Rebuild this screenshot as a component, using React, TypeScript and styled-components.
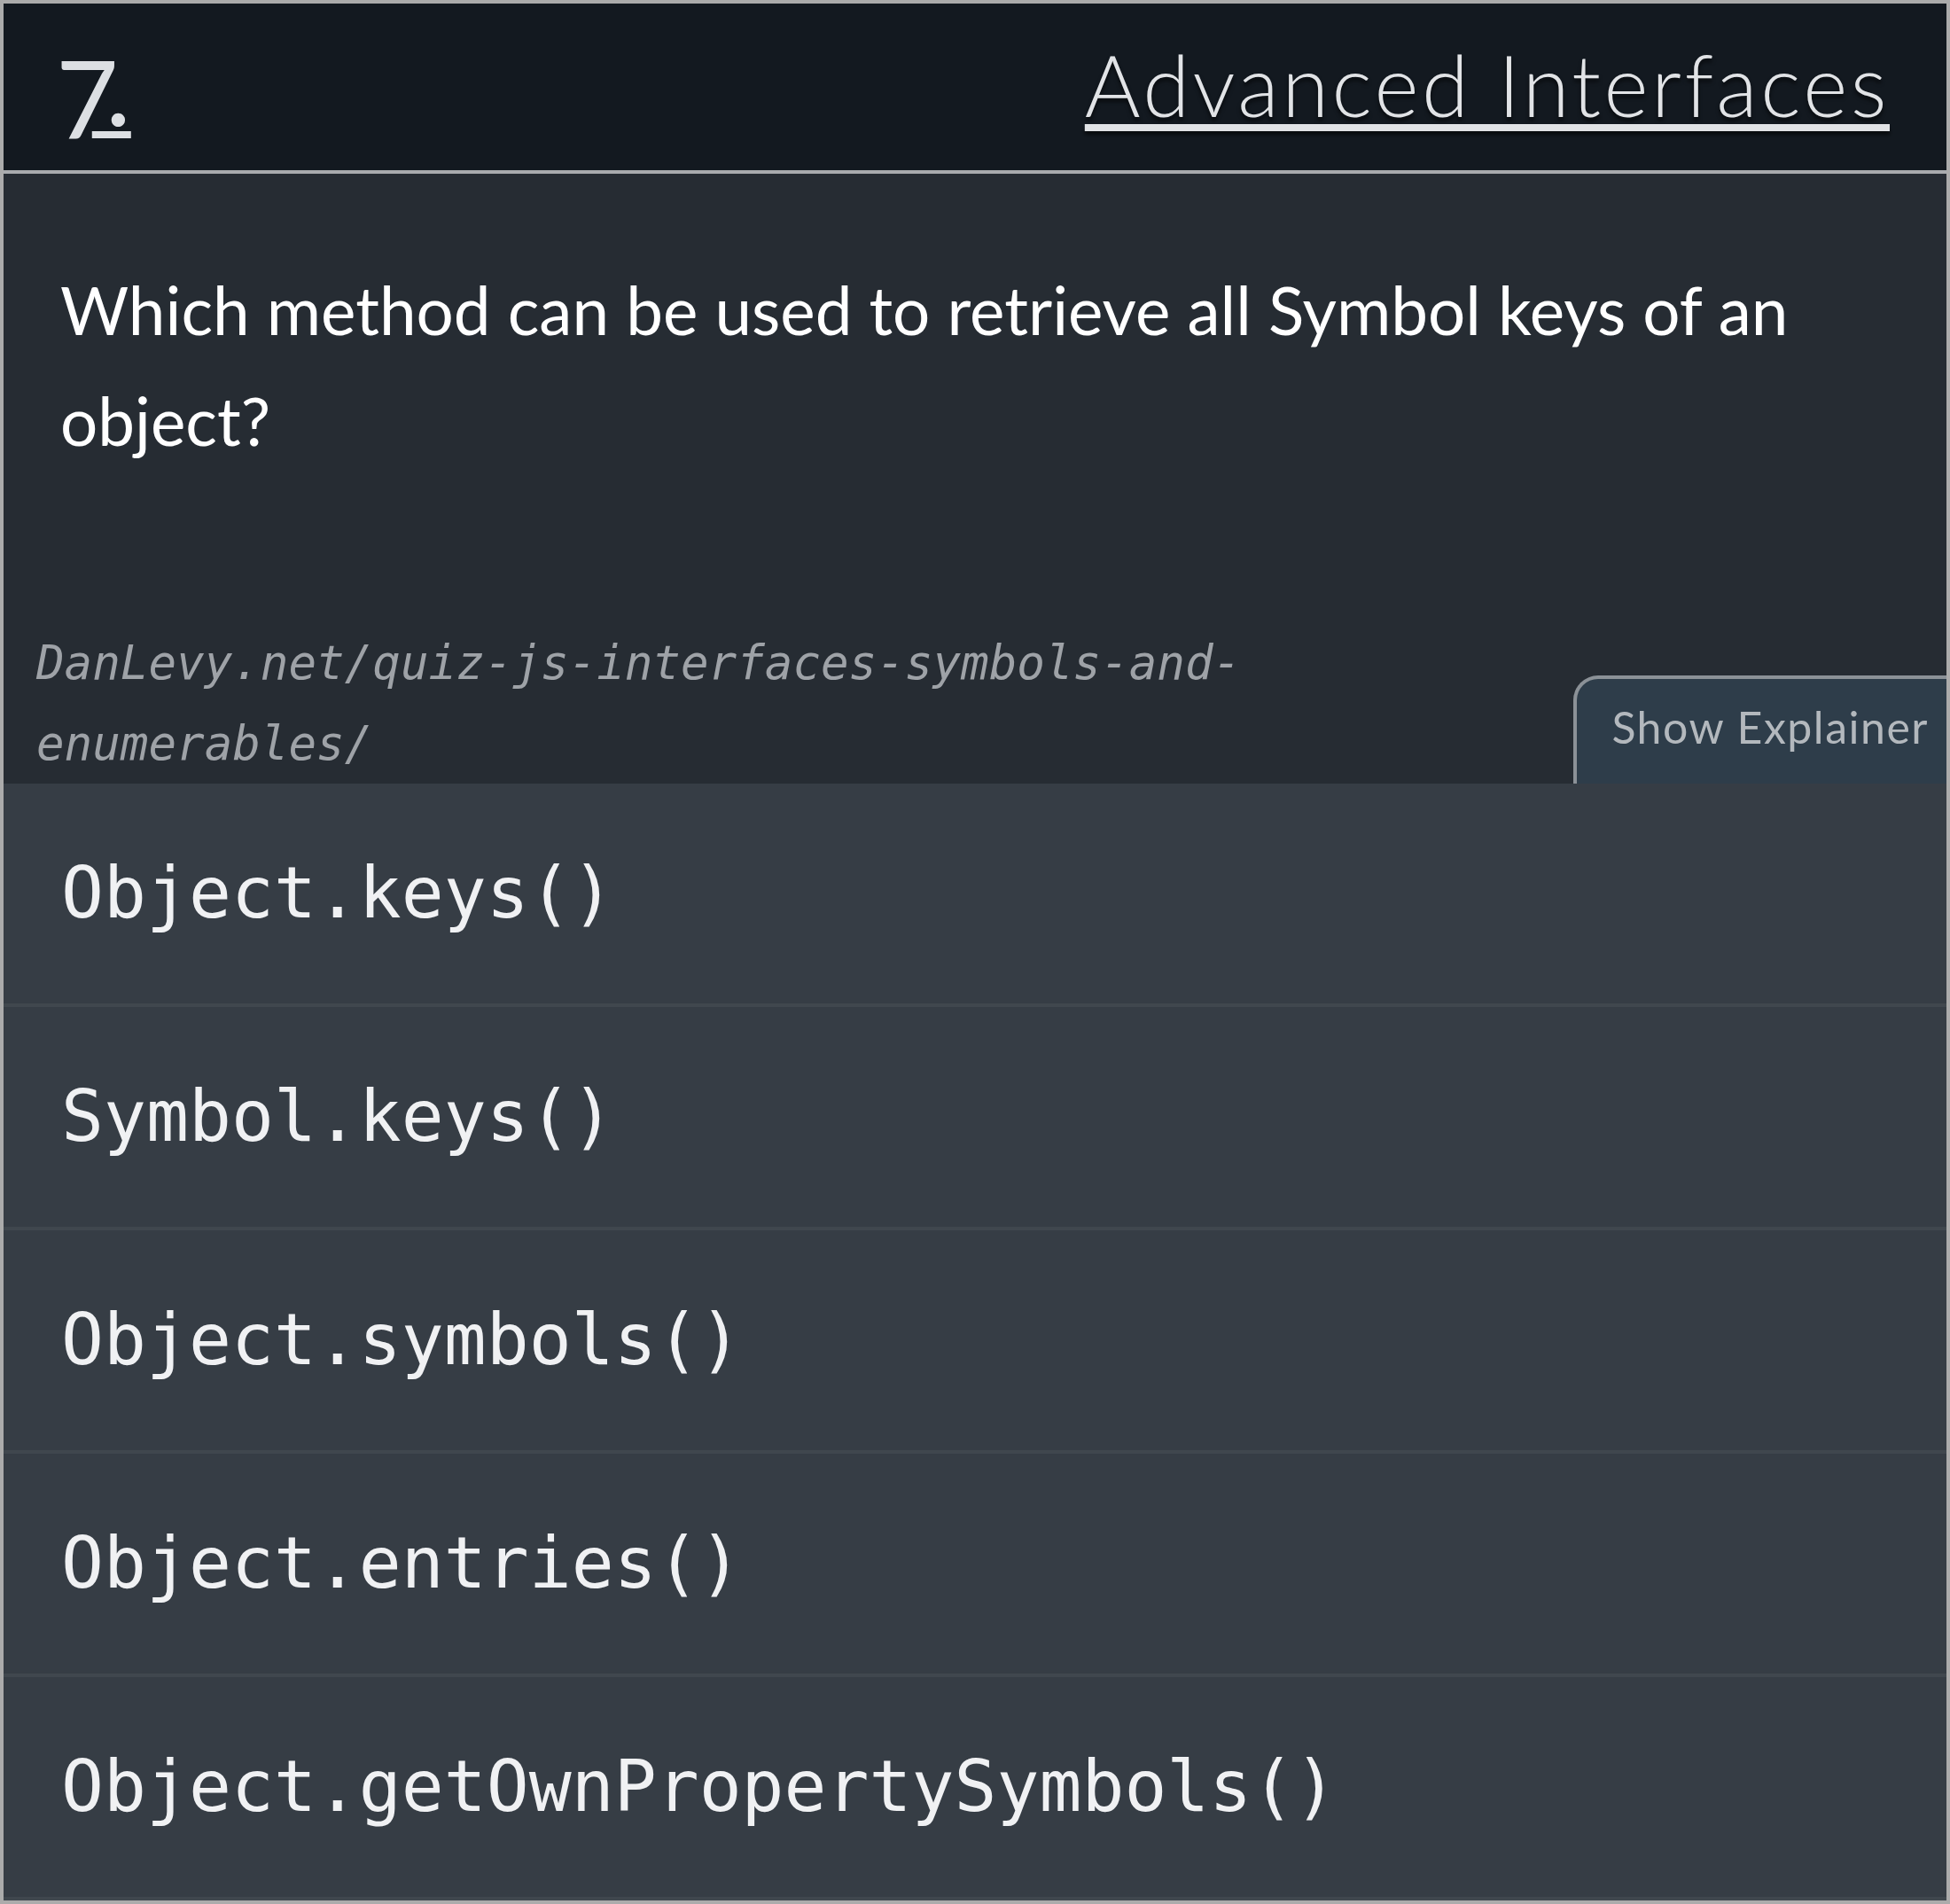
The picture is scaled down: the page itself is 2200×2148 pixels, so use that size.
import React from 'react';
import styled, { createGlobalStyle } from 'styled-components';

const GlobalStyle = createGlobalStyle`
  html, body {
    margin: 0;
    padding: 0;
    background: #ababab;
  }
  * {
    box-sizing: border-box;
  }
`;

const sans = `Lato, "Open Sans", "Liberation Sans", sans-serif`;
const mono = `"DejaVu Sans Mono", "Liberation Mono", monospace`;

// Card shell
const Card = styled.section`
  width: 2200px;
  height: 2148px;
  border: 4px solid #ababab;
  background: #363d45;
  display: flex;
  flex-direction: column;
`;

// Header: number + topic
const Header = styled.header`
  flex: none;
  height: 192px;
  display: flex;
  justify-content: space-between;
  align-items: flex-start;
  padding: 0 64px 0 59px;
  background: #131920;
  border-bottom: 4px solid #a9abae;
`;

const QuestionNumber = styled.a`
  margin-top: 30px;
  font-family: ${sans};
  font-size: 122px;
  line-height: 122px;
  color: #dcdfe3;
  text-decoration: none;
  white-space: nowrap;
`;

// lining 7 pushed down to mimic an old-style figure
const Seven = styled.span`
  vertical-align: -15px;
  letter-spacing: -30px;
`;

const Dot = styled.span`
  text-decoration: underline;
  text-decoration-thickness: 8px;
  text-underline-offset: 6px;
`;

const Gap = styled.span`
  letter-spacing: -16px;
`;

const Topic = styled.a`
  margin-top: 43px;
  font-family: ${sans};
  font-weight: 300;
  font-size: 96px;
  line-height: 96px;
  letter-spacing: 3.5px;
  color: #e1e3e6;
  text-decoration: underline;
  text-decoration-thickness: 8px;
  text-underline-offset: 8px;
  text-shadow: 0 4px 4px rgba(0, 0, 0, 0.6);
  white-space: nowrap;
`;

// Question panel
const QuestionPanel = styled.div`
  flex: none;
  height: 688px;
  display: flex;
  flex-direction: column;
  background: #262c33;
`;

const QuestionText = styled.p`
  margin: 0;
  padding: 91px 64px 0 64px;
  font-family: ${sans};
  font-size: 74.6px;
  line-height: 125px;
  color: #ffffff;
`;

const Footer = styled.div`
  margin-top: auto;
  display: flex;
  justify-content: space-between;
  align-items: flex-end;
`;

const SourceLink = styled.a`
  max-width: 1440px;
  padding-left: 37px;
  font-family: ${mono};
  font-style: italic;
  font-size: 52.5px;
  line-height: 91px;
  color: #9ea2a7;
  text-decoration: none;
`;

const ExplainerButton = styled.button`
  flex: none;
  height: 122px;
  display: flex;
  align-items: flex-start;
  padding: 24px 20px 0 39px;
  background: #2e3d4a;
  border: 4px solid #8b9197;
  border-right: none;
  border-bottom: none;
  border-top-left-radius: 28px;
  font-family: ${sans};
  font-size: 50px;
  line-height: 1.2;
  letter-spacing: 1.5px;
  color: #b3b8bd;
  cursor: pointer;
`;

// Answer options
const OptionList = styled.ul`
  list-style: none;
  margin: 0;
  padding: 0;
  background: #363d45;
`;

const OptionItem = styled.li`
  padding: 64px 62px 64px 65px;
  border-bottom: 4px solid #40474e;
  font-family: ${mono};
  font-size: 79.7px;
  line-height: 120px;
  color: #f0f1f3;
  white-space: nowrap;
`;

const options = [
  'Object.keys()',
  'Symbol.keys()',
  'Object.symbols()',
  'Object.entries()',
  'Object.getOwnPropertySymbols()',
];

export default function App() {
  return (
    <>
      <GlobalStyle />
      <Card>
        <Header>
          <QuestionNumber href="#7">
            <Seven>7</Seven>
            <Dot>
              <Gap>{'\u00a0'}</Gap>.
            </Dot>
          </QuestionNumber>
          <Topic href="#advanced-interfaces">Advanced Interfaces</Topic>
        </Header>
        <QuestionPanel>
          <QuestionText>
            Which method can be used to retrieve all Symbol keys of an object?
          </QuestionText>
          <Footer>
            <SourceLink href="#source">
              DanLevy.net/quiz-js-interfaces-symbols-and-enumerables/
            </SourceLink>
            <ExplainerButton>Show Explainer</ExplainerButton>
          </Footer>
        </QuestionPanel>
        <OptionList>
          {options.map((opt) => (
            <OptionItem key={opt}>{opt}</OptionItem>
          ))}
        </OptionList>
      </Card>
    </>
  );
}
